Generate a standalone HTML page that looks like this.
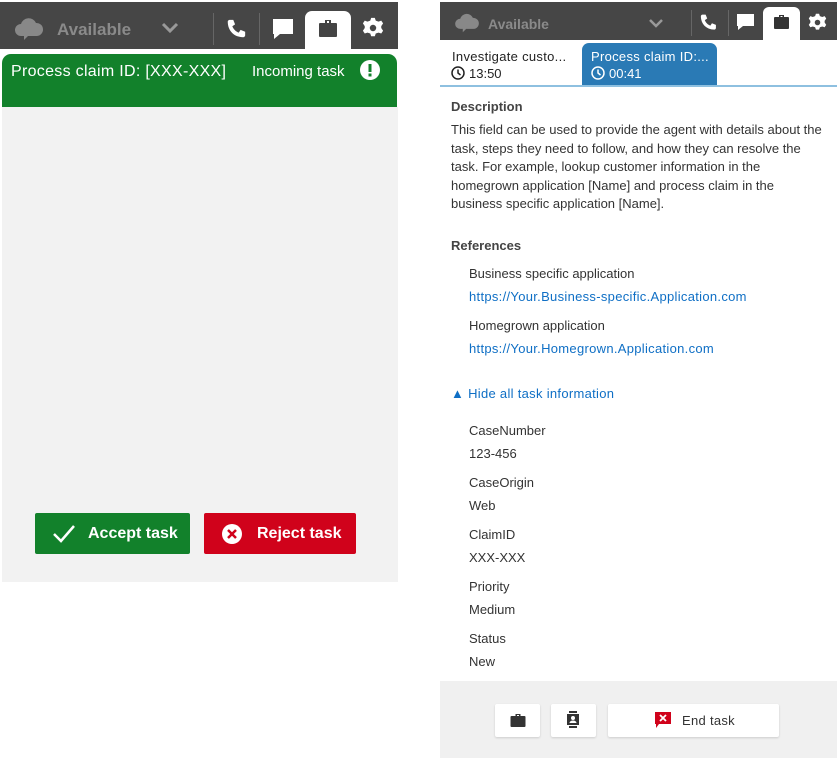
<!DOCTYPE html>
<html><head><meta charset="utf-8"><style>
*{margin:0;padding:0;box-sizing:border-box}
body{width:837px;height:758px;background:#fff;font-family:"Liberation Sans",sans-serif;position:relative;overflow:hidden}
.a{position:absolute}
.t{position:absolute;font-size:13px;color:#333;white-space:nowrap}
.b{font-weight:bold;color:#444}
.l{color:#0f6fc5;letter-spacing:0.3px}
</style></head><body>
<!-- left panel -->
<div class="a" style="left:0;top:2px;width:398px;height:47px;background:#464646"></div>
<svg class="a" style="left:14px;top:16px" width="30" height="26" viewBox="0 0 30 26"><path d="M7 20a6 6 0 0 1 0-12a8 8 0 0 1 15-1a6 6 0 0 1 1 13h-9l-4 4v-4z" fill="#888"/></svg>
<div class="t" style="left:57px;top:20px;font-size:17px;color:#8a8a8a;font-weight:bold">Available</div>
<svg class="a" style="left:161px;top:22px" width="18" height="12"><path d="M2 2l7 7 7-7" stroke="#999" stroke-width="3" fill="none"/></svg>
<div class="a" style="left:213px;top:13px;width:1px;height:32px;background:#666"></div>
<div class="a" style="left:259px;top:13px;width:1px;height:32px;background:#666"></div>
<svg class="a" style="left:224px;top:18px" width="24" height="22" viewBox="0 0 24 24"><path d="M5 2l4 0 2 5-3 2c1 3 4 6 7 7l2-3 5 2v4c0 1-1 2-2 2C10 21 3 14 3 4c0-1 1-2 2-2z" fill="#fff"/></svg>
<svg class="a" style="left:272px;top:18px" width="22" height="22"><path d="M1 1h20v15H8l-6 5v-5H1z" fill="#fff"/></svg>
<div class="a" style="left:305px;top:11px;width:46px;height:38px;background:#fff;border-radius:7px 7px 0 0"></div>
<svg class="a" style="left:318px;top:19px" width="20" height="19"><path d="M7 1h6v3h5a1 1 0 0 1 1 1v12a1 1 0 0 1-1 1H2a1 1 0 0 1-1-1V5a1 1 0 0 1 1-1h5zM9 2v2h2V2z" fill="#444"/></svg>
<svg class="a" style="left:362px;top:17px" width="22" height="22" viewBox="0 0 24 24"><path d="M10 1h4l1 3 3 1 3-1 2 3-2 3v2l2 3-2 3-3-1-3 1-1 3h-4l-1-3-3-1-3 1-2-3 2-3v-2L1 7l2-3 3 1 3-1z" fill="#fff"/><circle cx="12" cy="12" r="3.5" fill="#464646"/></svg>
<div class="a" style="left:2px;top:54px;width:395px;height:53px;background:#12812b;border-radius:9px 9px 0 0"></div>
<div class="t" style="left:11px;top:63px;font-size:16px;color:#fff;letter-spacing:0.3px">Process claim ID: [XXX-XXX]</div>
<div class="t" style="left:252px;top:63px;font-size:15px;color:#fff">Incoming task</div>
<svg class="a" style="left:359px;top:59px" width="22" height="22"><circle cx="11" cy="11" r="10" fill="#fff"/><rect x="9.5" y="5" width="3" height="8" fill="#12812b"/><rect x="9.5" y="14.5" width="3" height="3" fill="#12812b"/></svg>
<div class="a" style="left:2px;top:107px;width:396px;height:475px;background:#f2f2f2"></div>
<div class="a" style="left:35px;top:513px;width:155px;height:41px;background:#12812b;border-radius:2px"></div>
<svg class="a" style="left:52px;top:524px" width="24" height="20"><path d="M2 10l7 7L22 2" stroke="#fff" stroke-width="2.5" fill="none"/></svg>
<div class="t" style="left:88px;top:525px;font-size:16px;color:#fff;font-weight:bold">Accept task</div>
<div class="a" style="left:204px;top:513px;width:152px;height:41px;background:#d0021b;border-radius:2px"></div>
<svg class="a" style="left:221px;top:523px" width="22" height="22"><circle cx="11" cy="11" r="10" fill="#fff"/><path d="M7 7l8 8M15 7l-8 8" stroke="#d0021b" stroke-width="2.5"/></svg>
<div class="t" style="left:257px;top:525px;font-size:16px;color:#fff;font-weight:bold">Reject task</div>

<!-- right panel -->
<div class="a" style="left:440px;top:2px;width:397px;height:38px;background:#464646"></div>
<svg class="a" style="left:454px;top:12px" width="26" height="22" viewBox="0 0 30 26"><path d="M7 20a6 6 0 0 1 0-12a8 8 0 0 1 15-1a6 6 0 0 1 1 13h-9l-4 4v-4z" fill="#888"/></svg>
<div class="t" style="left:488px;top:16px;font-size:14px;color:#8a8a8a;font-weight:bold">Available</div>
<svg class="a" style="left:648px;top:18px" width="16" height="10"><path d="M2 2l6 6 6-6" stroke="#999" stroke-width="2.5" fill="none"/></svg>
<div class="a" style="left:691px;top:10px;width:1px;height:26px;background:#666"></div>
<div class="a" style="left:728px;top:10px;width:1px;height:26px;background:#666"></div>
<svg class="a" style="left:698px;top:13px" width="20" height="19" viewBox="0 0 24 24"><path d="M5 2l4 0 2 5-3 2c1 3 4 6 7 7l2-3 5 2v4c0 1-1 2-2 2C10 21 3 14 3 4c0-1 1-2 2-2z" fill="#fff"/></svg>
<svg class="a" style="left:736px;top:13px" width="19" height="19"><path d="M1 1h17v12H7l-5 4v-4H1z" fill="#fff"/></svg>
<div class="a" style="left:763px;top:7px;width:37px;height:33px;background:#fff;border-radius:6px 6px 0 0"></div>
<svg class="a" style="left:773px;top:14px" width="17" height="16"><path d="M6 1h5v2h4a1 1 0 0 1 1 1v10a1 1 0 0 1-1 1H2a1 1 0 0 1-1-1V4a1 1 0 0 1 1-1h4zM7.5 2v1h2V2z" fill="#333"/></svg>
<svg class="a" style="left:808px;top:13px" width="19" height="19" viewBox="0 0 24 24"><path d="M10 1h4l1 3 3 1 3-1 2 3-2 3v2l2 3-2 3-3-1-3 1-1 3h-4l-1-3-3-1-3 1-2-3 2-3v-2L1 7l2-3 3 1 3-1z" fill="#fff"/><circle cx="12" cy="12" r="3.5" fill="#464646"/></svg>
<div class="t" style="left:452px;top:49px;color:#222;letter-spacing:0.3px">Investigate custo...</div>
<svg class="a" style="left:451px;top:66px" width="14" height="14"><circle cx="7" cy="7" r="6" stroke="#222" stroke-width="1.5" fill="none"/><path d="M7 3.5v3.5l2.5 2" stroke="#222" stroke-width="1.5" fill="none"/></svg>
<div class="t" style="left:469px;top:66px;color:#222">13:50</div>
<div class="a" style="left:582px;top:43px;width:135px;height:42px;background:#2a7ab5;border-radius:7px 7px 0 0"></div>
<div class="t" style="left:591px;top:49px;color:#fff;letter-spacing:0.3px">Process claim ID:...</div>
<svg class="a" style="left:591px;top:66px" width="14" height="14"><circle cx="7" cy="7" r="6" stroke="#fff" stroke-width="1.5" fill="none"/><path d="M7 3.5v3.5l2.5 2" stroke="#fff" stroke-width="1.5" fill="none"/></svg>
<div class="t" style="left:609px;top:66px;color:#fff">00:41</div>
<div class="a" style="left:440px;top:85px;width:397px;height:2px;background:#8ec0e0"></div>
<div class="t b" style="left:451px;top:99px">Description</div>
<div class="t" style="left:451px;top:121px;line-height:18.5px;white-space:normal;width:372px">This field can be used to provide the agent with details about the task, steps they need to follow, and how they can resolve the task. For example, lookup customer information in the homegrown application [Name] and process claim in the business specific application [Name].</div>
<div class="t b" style="left:451px;top:238px">References</div>
<div class="t" style="left:469px;top:266px">Business specific application</div>
<div class="t l" style="left:469px;top:289px">https://Your.Business-specific.Application.com</div>
<div class="t" style="left:469px;top:318px">Homegrown application</div>
<div class="t l" style="left:469px;top:341px">https://Your.Homegrown.Application.com</div>
<div class="t l" style="left:451px;top:386px">▲ Hide all task information</div>
<div class="t" style="left:469px;top:423px">CaseNumber</div>
<div class="t" style="left:469px;top:446px">123-456</div>
<div class="t" style="left:469px;top:475px">CaseOrigin</div>
<div class="t" style="left:469px;top:498px">Web</div>
<div class="t" style="left:469px;top:527px">ClaimID</div>
<div class="t" style="left:469px;top:550px">XXX-XXX</div>
<div class="t" style="left:469px;top:579px">Priority</div>
<div class="t" style="left:469px;top:602px">Medium</div>
<div class="t" style="left:469px;top:631px">Status</div>
<div class="t" style="left:469px;top:654px">New</div>
<div class="a" style="left:440px;top:681px;width:397px;height:77px;background:#f0f0f0"></div>
<div class="a" style="left:495px;top:704px;width:45px;height:33px;background:#fff;border-radius:2px;box-shadow:0 1px 2px rgba(0,0,0,.15)"></div>
<svg class="a" style="left:510px;top:713px" width="16" height="15"><path d="M5.5 1h5v2h4a1 1 0 0 1 1 1v9a1 1 0 0 1-1 1H1.5a1 1 0 0 1-1-1V4a1 1 0 0 1 1-1h4zM7 2v1h2V2z" fill="#333"/></svg>
<div class="a" style="left:551px;top:704px;width:45px;height:33px;background:#fff;border-radius:2px;box-shadow:0 1px 2px rgba(0,0,0,.15)"></div>
<svg class="a" style="left:566px;top:710px" width="14" height="20"><rect x="3" y="1" width="8" height="2" fill="#333"/><rect x="1" y="4" width="12" height="11" fill="#333"/><rect x="3" y="16" width="8" height="2" fill="#333"/><circle cx="7" cy="8" r="2" fill="#fff"/><path d="M3.5 13a3.5 2.5 0 0 1 7 0z" fill="#fff"/></svg>
<div class="a" style="left:608px;top:704px;width:171px;height:33px;background:#fff;border-radius:2px;box-shadow:0 1px 2px rgba(0,0,0,.15)"></div>
<svg class="a" style="left:655px;top:712px" width="16" height="17"><path d="M0 0h16v12H4l-3 4V12H0z" fill="#d0021b"/><path d="M5 3l6 6M11 3l-6 6" stroke="#fff" stroke-width="1.8"/></svg>
<div class="t" style="left:682px;top:713px;color:#333;letter-spacing:0.3px">End task</div>
</body></html>
